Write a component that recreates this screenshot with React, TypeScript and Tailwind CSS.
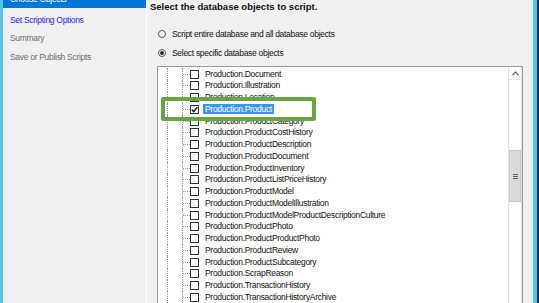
import React from "react";

const rows = [
  "Production.Document",
  "Production.Illustration",
  "Production.Location",
  "Production.Product",
  "Production.ProductCategory",
  "Production.ProductCostHistory",
  "Production.ProductDescription",
  "Production.ProductDocument",
  "Production.ProductInventory",
  "Production.ProductListPriceHistory",
  "Production.ProductModel",
  "Production.ProductModelIllustration",
  "Production.ProductModelProductDescriptionCulture",
  "Production.ProductPhoto",
  "Production.ProductProductPhoto",
  "Production.ProductReview",
  "Production.ProductSubcategory",
  "Production.ScrapReason",
  "Production.TransactionHistory",
  "Production.TransactionHistoryArchive",
  "Production.UnitMeasure",
];

function TreeRow({ label }: { label: string }) {
  const selected = label === "Production.Product";
  return (
    <div className="flex h-[11.75px] items-center">
      <div className="h-full w-[9px] shrink-0" />
      <div className="h-full w-[15px] shrink-0 border-l border-dotted border-[#9a9a9a]" />
      <div className="flex h-full w-[8px] shrink-0 items-center border-l border-dotted border-[#9a9a9a]">
        <div className="w-full border-t border-dotted border-[#9a9a9a]" />
      </div>
      <div className="flex h-[9px] w-[9px] shrink-0 items-center justify-center border border-[#333333] bg-white">
        {selected && (
          <svg width="7" height="7" viewBox="0 0 7 7">
            <path d="M0.8 3.6 L2.7 5.6 L6.3 1.2" fill="none" stroke="#111" strokeWidth="1.4" />
          </svg>
        )}
      </div>
      <span
        className={
          selected
            ? "ml-[4px] flex h-[10px] items-center whitespace-nowrap bg-[#3d95ee] px-[2px] text-white"
            : "ml-[4px] flex h-[10px] items-center whitespace-nowrap px-[2px] text-[#111111]"
        }
      >
        {label}
      </span>
    </div>
  );
}

export default function App() {
  return (
    <div
      className="flex h-[303px] w-[539px] overflow-hidden bg-[#f0f0f0] text-[8.5px] tracking-[-0.3px]"
      style={{ fontFamily: '"Liberation Sans", Arial, sans-serif' }}
    >
      <div className="w-[3px] shrink-0 bg-[#5bc2e7]" />
      {/* Left nav */}
      <div className="flex w-[143px] shrink-0 flex-col bg-[#f0f0f0]">
        <div className="-mt-[10px] flex h-[18px] items-center bg-[#0078d7] pl-[7px] text-white">
          Choose Objects
        </div>
        <div className="pt-[3px]">
          <div className="flex h-[18.5px] items-center pl-[7px] text-[#1a1aff]">Set Scripting Options</div>
          <div className="flex h-[18.5px] items-center pl-[7px] text-[#6d6d6d]">Summary</div>
          <div className="flex h-[18.5px] items-center pl-[7px] text-[#6d6d6d]">Save or Publish Scripts</div>
        </div>
      </div>
      <div className="w-px shrink-0 bg-white" />
      {/* Content */}
      <div className="flex w-[386px] shrink-0 flex-col pl-[3px]">
        <div className="flex h-[12px] items-center pt-[2px] text-[9.5px] font-bold tracking-normal text-[#111111]">
          Select the database objects to script.
        </div>
        <div className="mt-[16px] flex h-[12px] items-center pl-[8px] text-[#111111]">
          <div className="h-[8px] w-[8px] rounded-full border border-[#555] bg-white" />
          <span className="ml-[6px]">Script entire database and all database objects</span>
        </div>
        <div className="mt-[7px] flex h-[12px] items-center pl-[8px] text-[#111111]">
          <div className="flex h-[8px] w-[8px] items-center justify-center rounded-full border border-[#555] bg-white">
            <div className="h-[4px] w-[4px] rounded-full bg-[#222]" />
          </div>
          <span className="ml-[6px]">Select specific database objects</span>
        </div>
        {/* Tree box */}
        <div className="ml-[7px] mt-[7px] flex h-[249px] w-[366px] shrink-0 border border-[#9a9a9a] bg-white">
          <div className="relative flex-1 overflow-hidden pt-[1.2px]">
            {rows.map((r) => (
              <TreeRow key={r} label={r} />
            ))}
            <div className="absolute left-[3px] top-[30px] h-[24px] w-[155px] rounded-[2px] border-4 border-[#6aa544]" />
          </div>
          {/* Scrollbar */}
          <div className="flex w-[14px] shrink-0 flex-col border-l border-r border-[#e2e2e2] bg-white">
            <div className="flex h-[13px] items-center justify-center border-b border-[#e6e6e6]">
              <svg width="7" height="5" viewBox="0 0 7 5">
                <path d="M0.5 4 L3.5 1 L6.5 4" fill="none" stroke="#606060" strokeWidth="1.2" />
              </svg>
            </div>
            <div className="h-[70px]" />
            <div className="flex h-[52px] flex-col items-center justify-center gap-[1px] border border-[#c8c8c8] bg-[#dadada]">
              <div className="h-px w-[5px] bg-[#606060]" />
              <div className="h-px w-[5px] bg-[#606060]" />
              <div className="h-px w-[5px] bg-[#606060]" />
            </div>
            <div className="flex-1" />
            <div className="flex h-[13px] items-center justify-center">
              <svg width="7" height="5" viewBox="0 0 7 5">
                <path d="M0.5 1 L3.5 4 L6.5 1" fill="none" stroke="#606060" strokeWidth="1.2" />
              </svg>
            </div>
          </div>
        </div>
      </div>
      <div className="w-[4px] shrink-0 bg-[#5bc2e7]" />
      <div className="w-[2px] shrink-0 bg-[#1f3a5a]" />
    </div>
  );
}
